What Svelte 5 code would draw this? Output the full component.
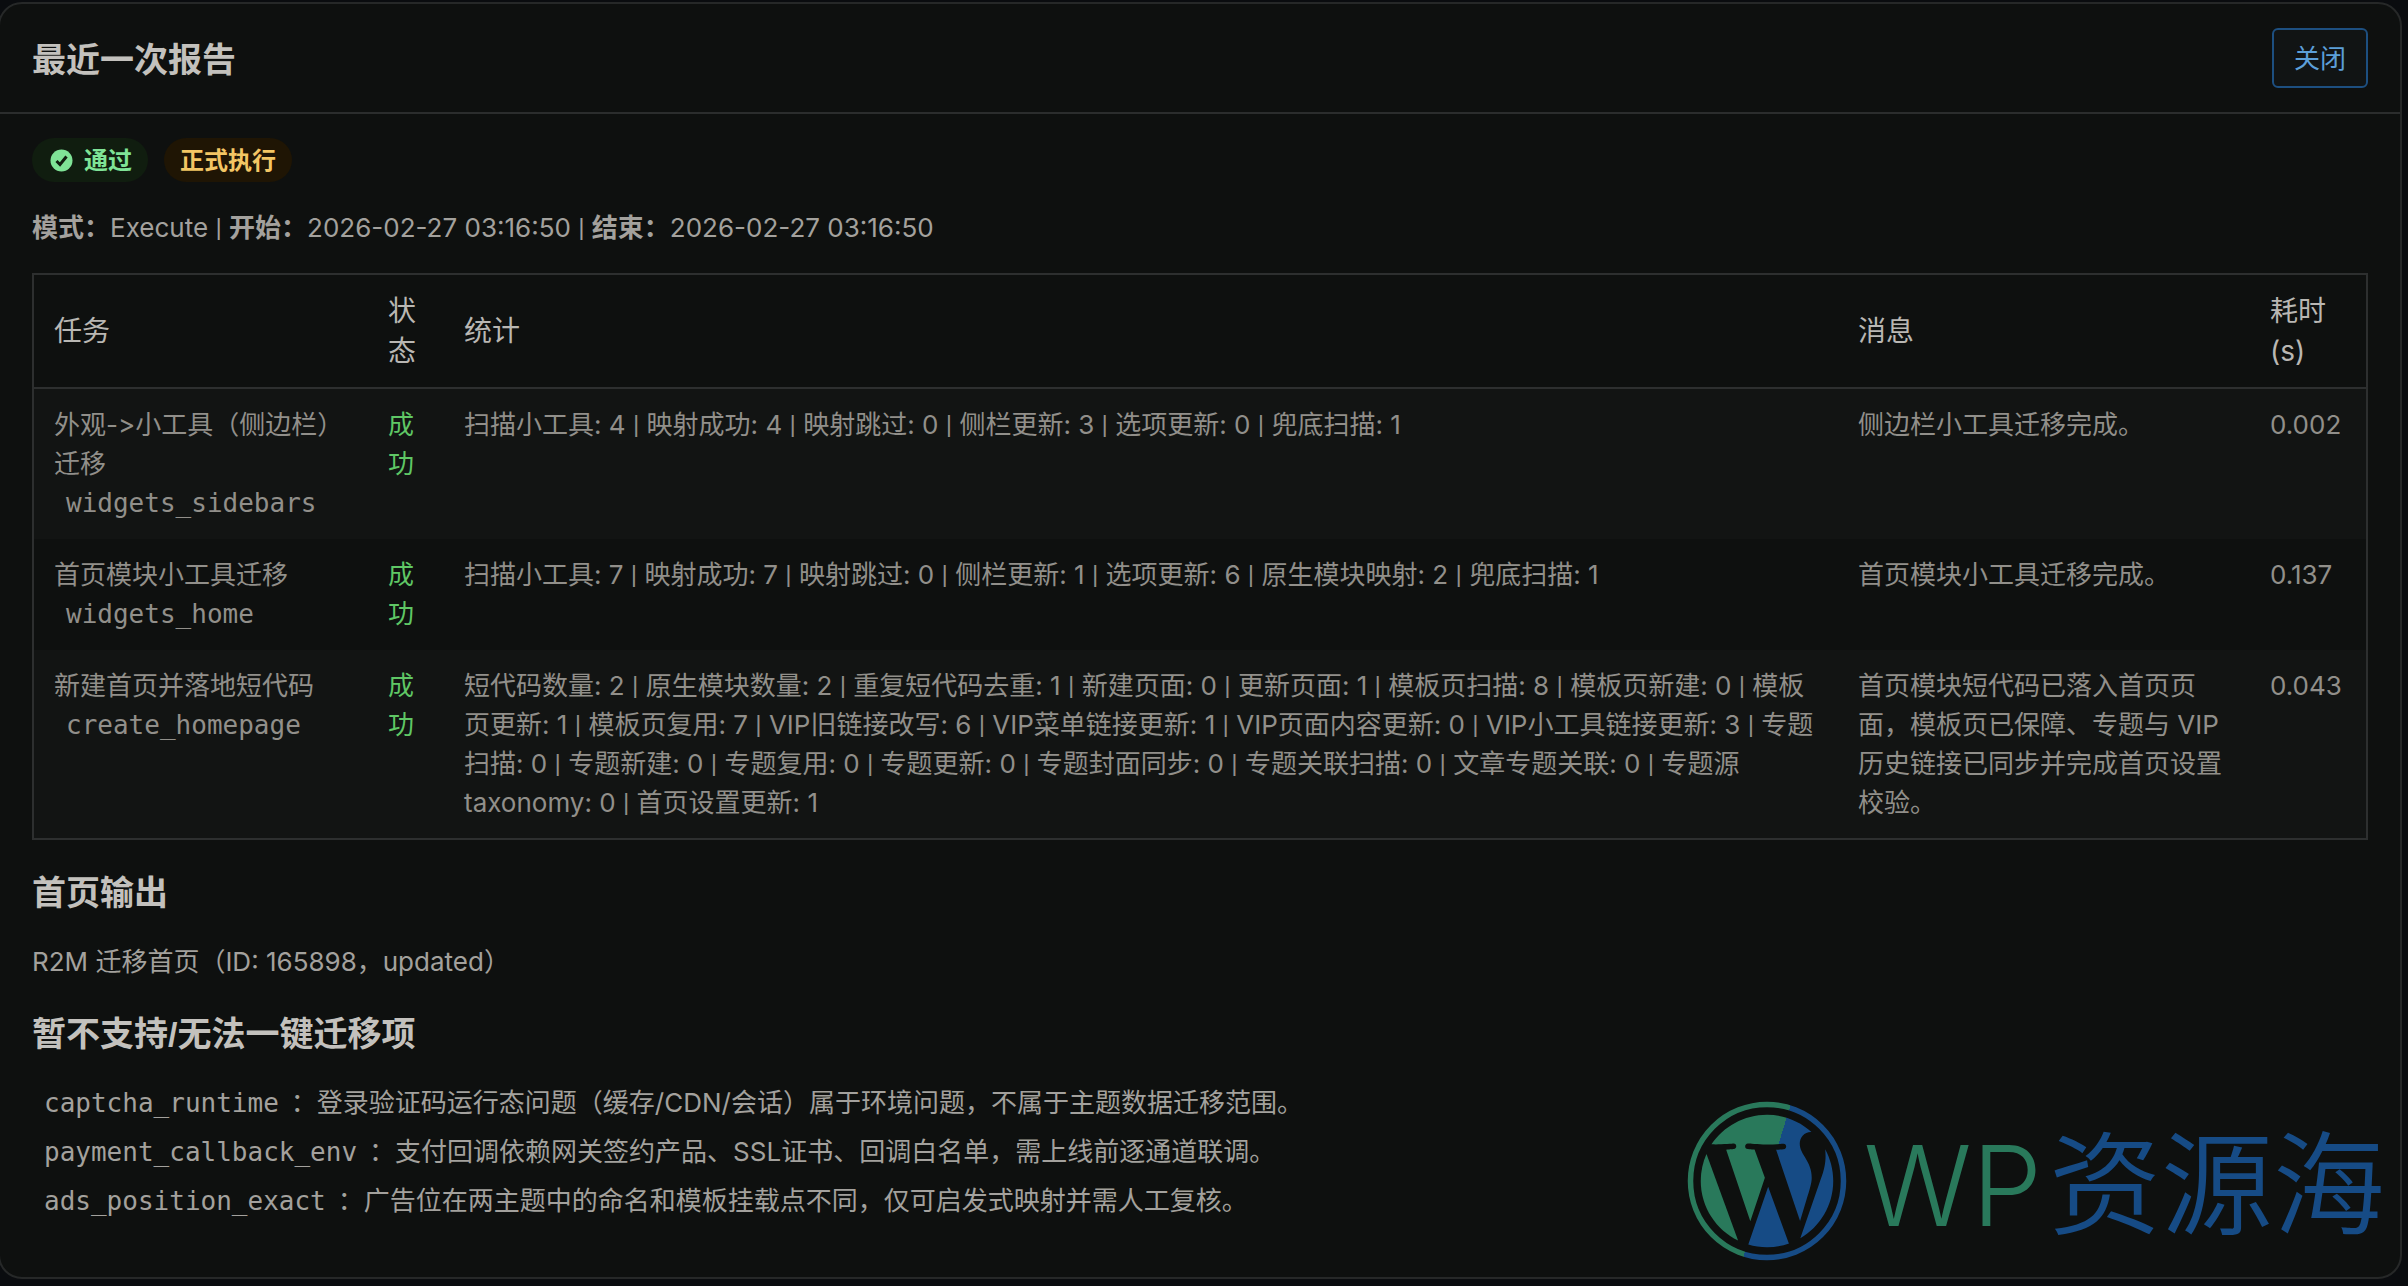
<script>
  const meta = [
    { label: '模式', value: 'Execute' },
    { label: '开始', value: '2026-02-27 03:16:50' },
    { label: '结束', value: '2026-02-27 03:16:50' }
  ];

  const tasks = [
    {
      name: '外观->小工具（侧边栏）迁移',
      code: 'widgets_sidebars',
      stats: '扫描小工具: 4 | 映射成功: 4 | 映射跳过: 0 | 侧栏更新: 3 | 选项更新: 0 | 兜底扫描: 1',
      message: '侧边栏小工具迁移完成。',
      time: '0.002'
    },
    {
      name: '首页模块小工具迁移',
      code: 'widgets_home',
      stats: '扫描小工具: 7 | 映射成功: 7 | 映射跳过: 0 | 侧栏更新: 1 | 选项更新: 6 | 原生模块映射: 2 | 兜底扫描: 1',
      message: '首页模块小工具迁移完成。',
      time: '0.137'
    },
    {
      name: '新建首页并落地短代码',
      code: 'create_homepage',
      stats:
        '短代码数量: 2 | 原生模块数量: 2 | 重复短代码去重: 1 | 新建页面: 0 | 更新页面: 1 | 模板页扫描: 8 | 模板页新建: 0 | 模板页更新: 1 | 模板页复用: 7 | VIP旧链接改写: 6 | VIP菜单链接更新: 1 | VIP页面内容更新: 0 | VIP小工具链接更新: 3 | 专题扫描: 0 | 专题新建: 0 | 专题复用: 0 | 专题更新: 0 | 专题封面同步: 0 | 专题关联扫描: 0 | 文章专题关联: 0 | 专题源 taxonomy: 0 | 首页设置更新: 1',
      message: '首页模块短代码已落入首页页面，模板页已保障、专题与 VIP 历史链接已同步并完成首页设置校验。',
      time: '0.043'
    }
  ];

  const unsupported = [
    { code: 'captcha_runtime', text: '登录验证码运行态问题（缓存/CDN/会话）属于环境问题，不属于主题数据迁移范围。' },
    { code: 'payment_callback_env', text: '支付回调依赖网关签约产品、SSL证书、回调白名单，需上线前逐通道联调。' },
    { code: 'ads_position_exact', text: '广告位在两主题中的命名和模板挂载点不同，仅可启发式映射并需人工复核。' }
  ];
</script>

{#snippet bar()}{' '}<span class="bar">|</span>{' '}{/snippet}

<main class="panel">
  <header>
    <h2>最近一次报告</h2>
    <button type="button">关闭</button>
  </header>

  <section class="body">
    <div class="badges">
      <span class="badge ok">
        <svg viewBox="0 0 26 26" aria-hidden="true">
          <circle cx="13.5" cy="13.5" r="11" />
          <path d="M8.500 14l3.500 3.500L18.500 9.500" />
        </svg>
        通过
      </span>
      <span class="badge run">正式执行</span>
    </div>

    <p class="meta">
      {#each meta as m, i}{#if i}{@render bar()}{/if}<strong>{m.label}：</strong>{m.value}{/each}
    </p>

    <table>
      <colgroup>
        <col class="c-task" /><col class="c-state" /><col /><col class="c-msg" /><col class="c-time" />
      </colgroup>
      <thead>
        <tr><th>任务</th><th>状态</th><th>统计</th><th>消息</th><th>耗时(s)</th></tr>
      </thead>
      <tbody>
        {#each tasks as t}
          <tr>
            <td>{t.name}<br /><code>{t.code}</code></td>
            <td class="success">成功</td>
            <td>{#each t.stats.split(' | ') as s, i}{#if i}{@render bar()}{/if}{s}{/each}</td>
            <td>{t.message}</td>
            <td>{t.time}</td>
          </tr>
        {/each}
      </tbody>
    </table>

    <h3>首页输出</h3>
    <p>R2M 迁移首页（ID: 165898，updated）</p>

    <h3>暂不支持/无法一键迁移项</h3>
    <ul>
      {#each unsupported as u}
        <li><code>{u.code}</code>：{u.text}</li>
      {/each}
    </ul>
  </section>

  <div class="watermark">
    <svg viewBox="0 0 160 160" aria-hidden="true">
      <defs>
        <linearGradient id="split" gradientUnits="userSpaceOnUse" x1="6" y1="57" x2="154" y2="103">
          <stop offset="0.5" stop-color="#29795b" />
          <stop offset="0.5" stop-color="#164b85" />
        </linearGradient>
      </defs>
      <circle cx="80" cy="80" r="76.500" fill="none" stroke="url(#split)" stroke-width="5.500" />
      <mask id="glyph">
        <g transform="translate(80 80) scale(6.14) translate(-12 -12)" fill="#fff">
          <path d="M21.469 6.825c.84 1.537 1.318 3.3 1.318 5.175 0 3.979-2.156 7.456-5.363 9.325l3.295-9.527c.615-1.54.82-2.771.82-3.864 0-.405-.026-.78-.07-1.11" />
          <path d="M13.488 6.93c.647-.03 1.232-.105 1.232-.105.582-.075.514-.93-.067-.899 0 0-1.755.135-2.88.135-1.064 0-2.85-.15-2.85-.15-.585-.03-.661.855-.075.885 0 0 .54.061 1.125.09l1.68 4.605-2.37 7.08L5.354 6.9c.649-.03 1.234-.1 1.234-.1.585-.075.516-.93-.065-.896 0 0-1.746.138-2.874.138-.2 0-.438-.008-.69-.015C4.911 3.15 8.235 1.215 12 1.215c2.809 0 5.365 1.072 7.286 2.833-.046-.003-.091-.009-.141-.009-1.06 0-1.812.923-1.812 1.914 0 .89.513 1.643 1.06 2.531.411.72.89 1.643.89 2.977 0 .915-.354 1.994-.821 3.479l-1.075 3.585z" />
          <path d="M12 22.784c-1.059 0-2.081-.153-3.048-.437l3.237-9.406 3.315 9.087c.024.053.05.101.078.149-1.12.393-2.325.609-3.582.609" />
          <path d="M1.211 12c0-1.564.336-3.05.935-4.39L7.29 21.709C3.694 19.96 1.212 16.271 1.211 12" />
        </g>
      </mask>
      <rect width="160" height="160" fill="url(#split)" mask="url(#glyph)" />
    </svg>
    <span class="wp">WP</span><span class="cn">资源海</span>
  </div>
</main>

<style>
  :global(body) {
    background: #0a0c0f;
  }

  .panel {
    position: relative;
    box-sizing: border-box;
    min-height: calc(100vh - 9px);
    margin: 2px 6px 6px -2px;
    border: 2px solid #262828;
    border-radius: 24px;
    background: #0e100f;
    color: #a3a19d;
    font: 26px/39px Inter, 'Noto Sans CJK SC', sans-serif;
  }

  header {
    display: flex;
    align-items: center;
    justify-content: space-between;
    padding: 24px 32px;
    border-bottom: 2px solid #2b2d2d;
  }

  h2,
  h3 {
    margin: 0;
    color: #c3c1bd;
    font-family: 'Liberation Sans', 'Noto Sans CJK SC', sans-serif;
    font-size: 34px;
    line-height: 44px;
    font-weight: 700;
  }

  h2 {
    padding-top: 4px;
  }

  button {
    height: 60px;
    padding: 0 20px;
    border: 2px solid #1d4f80;
    border-radius: 6px;
    background: #111414;
    color: #5c9fd8;
    font: inherit;
  }

  .body {
    padding: 24px 32px;
  }

  .badges {
    display: flex;
    gap: 16px;
  }

  .badge {
    display: flex;
    align-items: center;
    gap: 10px;
    height: 44px;
    padding: 0 16px;
    border-radius: 22px;
    font-size: 24px;
    font-weight: 700;
  }

  .badge svg {
    width: 26px;
    height: 26px;
  }

  .ok {
    background: #101d0f;
    color: #7fe396;
  }

  .ok circle {
    fill: #7fe396;
  }

  .ok path {
    fill: none;
    stroke: #101d0f;
    stroke-width: 3;
  }

  .run {
    background: #1f1504;
    color: #f3c664;
  }

  .bar {
    font-family: Roboto, sans-serif;
    line-height: 1;
  }

  p {
    margin: 0;
  }

  .meta {
    margin: 26px 0;
  }

  table {
    width: 100%;
    table-layout: fixed;
    border-collapse: separate;
    border-spacing: 0;
    border: 2px solid #2d2f2f;
  }

  .c-task {
    width: 334px;
  }

  .c-state {
    width: 76px;
  }

  .c-msg {
    width: 412px;
  }

  .c-time {
    width: 116px;
  }

  th,
  td {
    padding: 16px 20px;
    text-align: left;
    vertical-align: top;
  }

  th {
    border-bottom: 2px solid #2d2f2f;
    color: #b9b7b3;
    font-size: 28px;
    line-height: 40px;
    font-weight: 400;
    vertical-align: middle;
  }

  td {
    color: #918f8a;
    font-variant-ligatures: no-contextual;
  }

  tbody tr:nth-child(odd) {
    background: #121413;
  }

  .success {
    color: #5fc765;
  }

  code {
    padding: 0 12px;
    font: 26px/39px 'DejaVu Sans Mono', monospace;
  }

  h3 {
    margin: 31px 0 27px;
  }

  ul {
    display: grid;
    gap: 9px;
    margin: 0;
    padding: 0;
    list-style: none;
  }

  .watermark {
    position: absolute;
    right: 15px;
    bottom: 12px;
    display: flex;
    align-items: center;
    font-size: 112px;
    line-height: 160px;
    font-weight: 300;
  }

  .watermark svg {
    width: 160px;
    height: 160px;
    margin-right: 16px;
  }

  .watermark span {
    padding-top: 8px;
  }

  .wp {
    margin-right: 7px;
    color: #29795b;
  }

  .cn {
    color: #164b85;
    font-weight: 350;
  }
</style>
